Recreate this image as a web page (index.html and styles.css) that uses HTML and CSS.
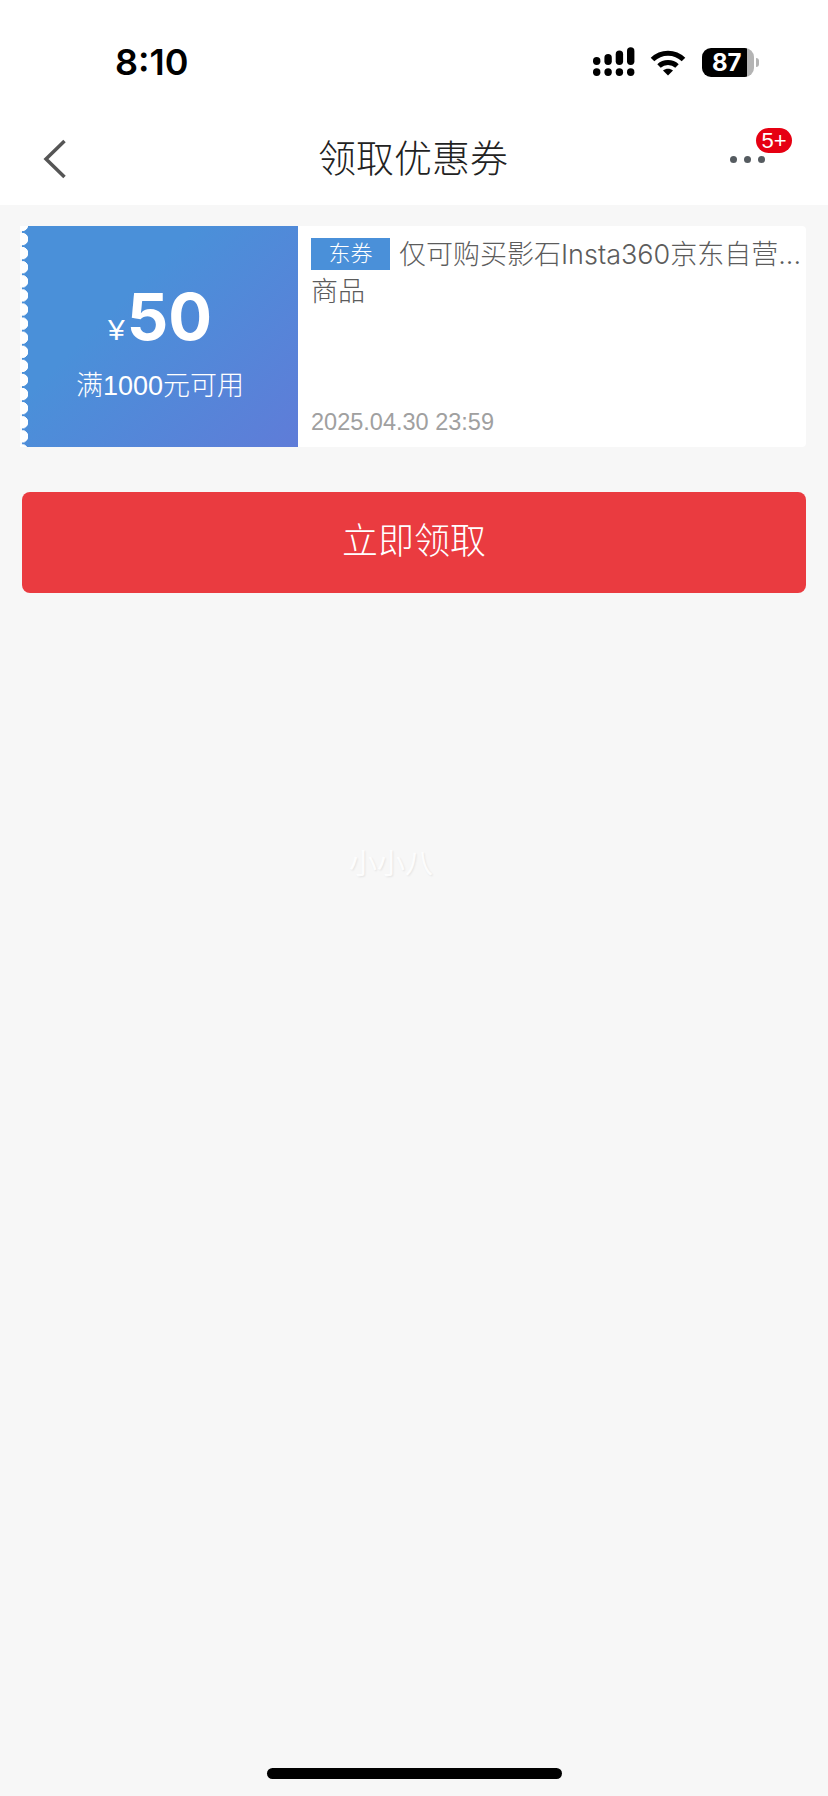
FILE: index.html
```html
<!DOCTYPE html>
<html lang="zh-CN">
<head>
    <meta charset="UTF-8">
    <meta name="viewport" content="width=device-width, initial-scale=1.0">
    <title>领取优惠券</title>
    <link rel="stylesheet" href="styles.css">
</head>
<body>
    <header class="header">
        <div class="status-bar">
            <span class="time">8:10</span>
            <div class="status-icons">
                <svg class="signal" width="42" height="30" viewBox="0 0 42 30">
                    <rect x="0" y="10" width="7.4" height="8" rx="3.7"/>
                    <rect x="11.4" y="7" width="7.4" height="11" rx="3.7"/>
                    <rect x="22.7" y="3.6" width="7.4" height="14.4" rx="3.7"/>
                    <rect x="34" y="0.3" width="7.4" height="17.7" rx="3.7"/>
                    <rect x="0" y="21.3" width="7.4" height="7.6" rx="3.7"/>
                    <rect x="11.4" y="21.3" width="7.4" height="7.6" rx="3.7"/>
                    <rect x="22.7" y="21.3" width="7.4" height="7.6" rx="3.7"/>
                    <rect x="34" y="21.3" width="7.4" height="7.6" rx="3.7"/>
                </svg>
                <svg class="wifi" width="36" height="27" viewBox="0 0 36 27">
                    <path d="M2.5 10.5C11 2 25 2 33.5 10.5" fill="none" stroke="#000" stroke-width="5"/>
                    <path d="M9 17C14 12.300 22 12.300 27 17" fill="none" stroke="#000" stroke-width="5"/>
                    <path d="M13 21.500C16 19 20 19 23 21.500L18 26.500Z"/>
                </svg>
                <div class="battery"><span>87</span></div>
            </div>
        </div>
        <nav class="nav">
            <svg class="back" width="24" height="40" viewBox="0 0 24 40">
                <path d="M21.500 2L3 20L21.500 38" fill="none" stroke="#555" stroke-width="3.5"/>
            </svg>
            <h1 class="nav-title">领取优惠券</h1>
            <div class="more">
                <i></i><i></i><i></i>
                <span class="badge">5+</span>
            </div>
        </nav>
    </header>

    <main class="content">
        <div class="coupon">
            <div class="coupon-left">
                <div class="amount"><span class="yen">¥</span>50</div>
                <div class="limit">满1000元可用</div>
            </div>
            <div class="coupon-right">
                <p class="coupon-title"><span class="tag">东券</span>仅可购买影石Insta360京东自营...<br>商品</p>
                <p class="coupon-date">2025.04.30 23:59</p>
            </div>
        </div>
        <button class="get-btn">立即领取</button>
    </main>

    <div class="watermark">小小八</div>
    <div class="home-bar"></div>
</body>
</html>
```

FILE: styles.css
```css
* {
    margin: 0;
    padding: 0;
    box-sizing: border-box;
    font-family: "Liberation Sans", "Noto Sans CJK SC", sans-serif;
}

body {
    position: relative;
    width: 828px;
    height: 1796px;
    overflow: hidden;
    background: #f7f7f7;
    display: flex;
    flex-direction: column;
}

.header {
    background: white;
    height: 205px;
}

.status-bar {
    height: 110px;
    padding: 47px 74px 0 115px;
    display: flex;
    justify-content: space-between;
    align-items: flex-start;
}

.time {
    font-family: Inter, sans-serif;
    font-size: 36px;
    line-height: 30px;
    font-weight: 600;
    color: black;
}

.status-icons {
    display: flex;
    align-items: center;
    gap: 15px;
}

.signal, .wifi {
    display: block;
}

.battery {
    position: relative;
    width: 52px;
    height: 29px;
    margin-left: 1px;
    border-radius: 9px;
    background: linear-gradient(90deg, black 87%, #b4b4b4 87%);
    display: flex;
    align-items: center;
    padding-left: 10px;
}

.battery span {
    font-family: Inter, sans-serif;
    font-size: 24px;
    font-weight: 700;
    color: white;
}

.battery::after {
    content: "";
    position: absolute;
    right: -5px;
    top: 10px;
    width: 3px;
    height: 9px;
    border-radius: 0 3px 3px 0;
    background: #b4b4b4;
}

.nav {
    height: 95px;
    padding: 0 63px 0 43px;
    display: flex;
    align-items: center;
    justify-content: space-between;
}

.back {
    margin-top: 2px;
}

.nav-title {
    font-size: 38px;
    font-weight: 300;
    color: #222;
    margin-left: 29px;
    padding-bottom: 4px;
}

.more {
    position: relative;
    display: flex;
    gap: 7px;
    margin-top: 4px;
}

.more i {
    width: 7px;
    height: 7px;
    border-radius: 50%;
    background: #555b60;
}

.badge {
    position: absolute;
    left: 26px;
    top: -28px;
    width: 36px;
    height: 25px;
    border-radius: 13px;
    background: #e60012;
    color: white;
    font-size: 22px;
    line-height: 25px;
    text-align: center;
}

.content {
    padding: 21px 22px 0;
}

.coupon {
    display: flex;
    height: 221px;
    background: white;
    border-radius: 4px;
}

.coupon-left {
    position: relative;
    width: 276px;
    background: linear-gradient(135deg, #4a90d9 35%, #5f7cd8 100%);
    border-radius: 4px 0 0 4px;
    color: white;
    text-align: center;
}

.coupon-left::before {
    content: "";
    position: absolute;
    left: -2px;
    top: 0;
    width: 9px;
    height: 100%;
    background: radial-gradient(circle at 2px 50%, #fff 6px, transparent 6.500px) 0 6px / 9px 14.1px repeat-y;
}

.amount {
    padding-top: 52px;
    font-family: Inter, sans-serif;
    font-size: 65px;
    line-height: 78px;
    font-weight: 700;
}

.yen {
    font-family: "Liberation Sans", sans-serif;
    font-size: 30px;
    font-weight: 400;
    margin-right: 2px;
}

.limit {
    margin-bottom: 0;
    font-size: 27px;
    line-height: 34px;
    font-weight: 300;
}

.coupon-right {
    flex: 1;
    padding: 12px 0 0 13px;
    display: flex;
    flex-direction: column;
    justify-content: space-between;
}

.coupon-title {
    font-family: Inter, "Noto Sans CJK SC", sans-serif;
    font-size: 27px;
    line-height: 37px;
    font-weight: 300;
    color: #5c5c5c;
    margin-top: -2px;
}

.tag {
    display: inline-block;
    width: 79px;
    height: 32px;
    margin: 2px 9px 0 0;
    background: #4a90d9;
    color: white;
    font-size: 22px;
    line-height: 32px;
    text-align: center;
    vertical-align: top;
    font-weight: 300;
}

.coupon-date {
    padding-bottom: 11px;
    font-size: 23.500px;
    line-height: 28px;
    color: #a0a0a0;
}

.get-btn {
    display: block;
    width: 100%;
    height: 101px;
    margin-top: 45px;
    padding-bottom: 10px;
    border: none;
    border-radius: 8px;
    background: #ea3b40;
    color: white;
    font-size: 36px;
    font-weight: 300;
}

.watermark {
    position: absolute;
    left: 349px;
    top: 846px;
    font-size: 28px;
    line-height: 38px;
    color: rgba(255,255,255,0.9);
    text-shadow: 1px 1px 2px rgba(0,0,0,0.08);
}

.home-bar {
    width: 295px;
    height: 11px;
    margin: auto auto 17px;
    border-radius: 6px;
    background: black;
}
```
